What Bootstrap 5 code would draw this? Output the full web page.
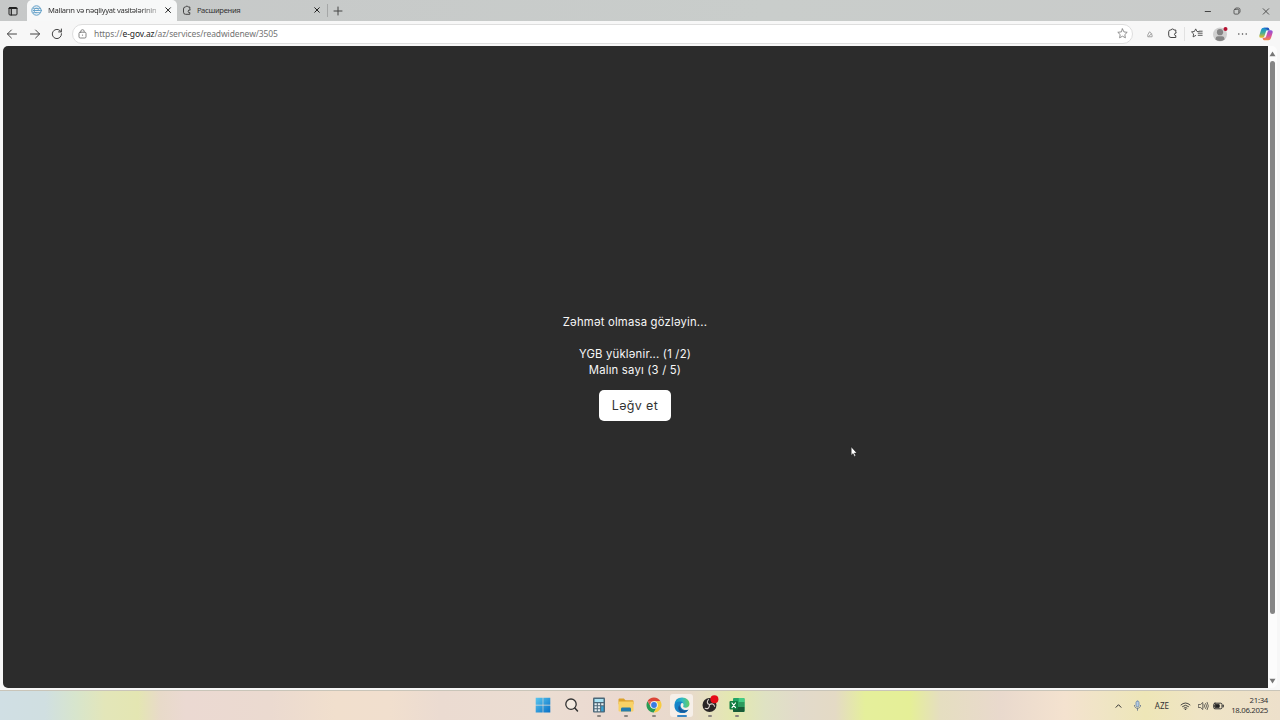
<!DOCTYPE html>
<html lang="az">
  <head>
    <meta charset="UTF-8" />
    <meta name="viewport" content="width=device-width, initial-scale=1.0" />
    <title>Malların və nəqliyyat vasitələrinin</title>
    <!-- Bootstrap CSS -->
    <link
      href="https://cdn.jsdelivr.net/npm/bootstrap@5.3.2/dist/css/bootstrap.min.css"
      rel="stylesheet"
    />
    <style>
      body {
        font-family: "Noto Sans", "Open Sans", sans-serif;
        background-color: #f7f7f7;
        color: #333;
        line-height: 1;
      }
      svg {
        display: block;
        flex-shrink: 0;
        fill: none;
        stroke: #444;
        stroke-width: 1;
        stroke-linecap: round;
        stroke-linejoin: round;
      }
      /* Tab strip */
      .tab-strip {
        height: 21px;
        background: linear-gradient(90deg, #c6c8c8, #c9cdcb 60%, #c9cbca);
        font-size: 7.6px;
      }
      .cell {
        display: flex;
        align-items: center;
        justify-content: center;
        flex-shrink: 0;
      }
      .w-menu { width: 25px; }
      .tab-active {
        width: 150px;
        height: 21px;
        margin-left: 2px;
        padding: 0 4px 1px;
        background-color: #f7f8f8;
        border-radius: 5px 5px 0 0;
      }
      .tab-idle {
        width: 150px;
        height: 21px;
        padding: 0 5px 1px;
      }
      .tab-title {
        margin-left: 5px;
        line-height: 14px;
        white-space: nowrap;
        letter-spacing: -0.3px;
      }
      .tab-fade {
        margin-left: 6px;
        -webkit-mask-image: linear-gradient(90deg, #000 85%, rgba(0, 0, 0, 0.4));
        mask-image: linear-gradient(90deg, #000 85%, rgba(0, 0, 0, 0.4));
      }
      .tab-line {
        width: 1px;
        height: 13px;
        background-color: #a5a7a7;
      }
      .w-plus { width: 20px; }
      .w-win { width: 29px; }
      /* Toolbar */
      .toolbar {
        height: 25px;
      }
      .w-nav { width: 22.5px; padding-left: 2px; }
      .address {
        height: 20px;
        margin-left: 4.5px;
        padding: 0 4px 0 5px;
        background-color: #fff;
        border: 1px solid #dedede;
        border-radius: 10px;
        font-size: 8.5px;
        letter-spacing: -0.1px;
        color: #737373;
      }
      .address-text {
        margin-left: 7px;
        line-height: 14px;
      }
      .address-text span { color: #222; }
      .w-tool { width: 22.6px; }
      .w-ext { margin-left: 5px; }
      .tool-line {
        width: 1px;
        height: 14px;
        background-color: #e2e2e2;
      }
      .w-fav { margin-left: 1px; }
      .w-copilot { margin-left: 1px; margin-right: 3px; }
      /* Page */
      .viewport-row {
        height: 642px;
        padding-left: 3px;
      }
      .overlay {
        background-color: #2c2c2c;
        border-radius: 5px 0 0 5px;
        color: #f7f7f7;
        font-family: Inter, "Noto Sans", sans-serif;
        font-size: 11.3px;
        letter-spacing: 0.2px;
        line-height: 16px;
        padding-top: 268px;
        padding-right: 1px;
      }
      .overlay p { margin: 0; }
      .btn-cancel {
        width: 72px;
        height: 31px;
        margin-top: 12px;
        padding: 1px 0 0;
        background-color: #fff;
        border-radius: 5px;
        color: #333;
        font-size: 12.5px;
        letter-spacing: 0.35px;
      }
      .scroll-track {
        width: 9px;
        margin-right: 3px;
        padding: 5px 0 4px;
        background-color: #fcfcfc;
        border-radius: 0 5px 5px 0;
      }
      .scroll-thumb {
        width: 5px;
        height: 553px;
        margin-top: 4px;
        background-color: #858585;
        border-radius: 3px;
      }
      .pointer {
        position: absolute;
        left: 850px;
        top: 446px;
      }
      /* Taskbar */
      .taskbar {
        height: 30px;
        border-top: 1px solid #c9c5b9;
        font-size: 8px;
        background: linear-gradient(90deg, #d0dfe4 0, #d0dfe1 45px, #d7e5cd 75px,
          #e3e6b9 105px, #e4e6b2 138px, #e8dac9 160px, #ebd9d2 185px, #ebdad0 270px,
          #f1dfcd 335px, #f1dfce 390px, #ebdbd1 440px, #ebddd2 540px, #ebd9d0 620px,
          #e8dacb 690px, #e3e9ae 735px, #dfe2c3 765px, #e2dacb 800px, #e4dac5 835px,
          #e5ef9b 865px, #e5ef97 910px, #e5dec0 940px, #e9d9cd 1000px, #f4e2cf 1065px,
          #efe5c3 1110px, #eee6b7 1145px, #efe4c5 1200px, #ede0cb 1280px);
      }
      .taskbar svg { stroke: #333; }
      .task-icons {
        margin-left: 529.5px;
      }
      .task-app {
        width: 27.7px;
        height: 29px;
        padding-top: 6px;
        display: flex;
        flex-direction: column;
        align-items: center;
      }
      .dash {
        width: 4px;
        height: 2px;
        margin-top: 2px;
        border-radius: 1px;
        background-color: #8b8580;
      }
      .dash-on {
        width: 10px;
        background-color: #3585c5;
      }
      .app-on {
        width: 23px;
        height: 23px;
        margin: 3px 2.3px 0;
        padding-top: 3px;
        background-color: #f6efe9;
        border-radius: 3px;
      }
      .app-obs {
        padding-top: 4px;
        padding-left: 1px;
      }
      .w-tray { width: 19.4px; }
      .w-state { width: 15px; }
      .lang { width: 28.5px; }
      .clock {
        width: 48px;
        padding-right: 12px;
        margin-left: 6.5px;
        line-height: 9.6px;
        font-size: 7.8px;
        letter-spacing: -0.3px;
        white-space: nowrap;
        justify-content: flex-end;
      }
    </style>
  </head>
  <body class="vh-100 overflow-hidden d-flex flex-column">
    <!-- Tabs -->
    <div class="tab-strip d-flex align-items-center">
      <div class="cell w-menu">
        <svg width="10" height="10" viewBox="0 0 10 10"><rect x="1" y="1.5" width="8" height="7.5" rx="1" stroke="#222" /><path d="M1 2.3h8M3.3 3v6" stroke="#222" stroke-width="1.2" /></svg>
      </div>
      <div class="tab-active d-flex align-items-center">
        <svg width="11" height="11" viewBox="0 0 11 11"><circle cx="5.5" cy="5.5" r="4.7" stroke="#5a9bc5" /><path d="M2.4 3.3h6.2M2.2 5.5h6.6M2.4 7.7h6.2M5.2 3.3c-3 0-3 4.4 0 4.4M6 3.3c2 .3 2 2 0 2.2" stroke="#5a9bc5" stroke-width=".9" /></svg>
        <div class="tab-title tab-fade">Malların və nəqliyyat vasitələrinin</div>
        <svg class="ms-auto" width="10" height="10" viewBox="0 0 10 10"><path d="M2.7 2.7l4.8 4.8M7.5 2.7L2.7 7.5" stroke="#222" /></svg>
      </div>
      <div class="tab-idle d-flex align-items-center">
        <svg width="10" height="11" viewBox="0 0 10 11"><path d="M7.8 3.5V2H6.2A1.4 1.4 0 0 0 3.6 2H3.2Q1.5 2 1.5 4v3.2Q1.5 9.3 3.6 9.3h4.2V7.5A1.3 1.3 0 1 1 7.8 5z" /></svg>
        <div class="tab-title">Расширения</div>
        <svg class="ms-auto" width="10" height="10" viewBox="0 0 10 10"><path d="M2.7 2.7l4.6 4.6M7.3 2.7L2.7 7.3" stroke="#222" /></svg>
      </div>
      <div class="tab-line"></div>
      <div class="cell w-plus">
        <svg width="10" height="10" viewBox="0 0 10 10"><path d="M5 1v8M1 5h8" /></svg>
      </div>
      <div class="cell w-win ms-auto">
        <svg width="10" height="10" viewBox="0 0 10 10"><path d="M2.2 5.5h5.3" /></svg>
      </div>
      <div class="cell w-win">
        <svg width="10" height="10" viewBox="0 0 10 10"><rect x="2" y="3.3" width="4.8" height="4.8" rx="1" stroke-width=".8" /><path d="M3.4 2.3Q3.5 2 4 2h2.4Q8 2 8 3.7V6q0 .6-.4.8" stroke-width=".8" /></svg>
      </div>
      <div class="cell w-win">
        <svg width="10" height="10" viewBox="0 0 10 10"><path d="M2.2 2.7l5.5 5.5M7.7 2.7L2.2 8.2" stroke-width=".9" /></svg>
      </div>
    </div>

    <!-- Address bar -->
    <div class="toolbar d-flex align-items-center">
      <div class="cell w-nav">
        <svg width="12" height="12" viewBox="0 0 12 12"><path d="M10.5 6h-9M5.4 2L1.4 6l4 4" /></svg>
      </div>
      <div class="cell w-nav">
        <svg width="12" height="12" viewBox="0 0 12 12"><path d="M1.5 6h9M6.6 2l4 4-4 4" /></svg>
      </div>
      <div class="cell w-nav">
        <svg width="12" height="12" viewBox="0 0 12 12"><path d="M10.5 5.7A4.6 4.6 0 1 1 9 2.6l1.2 1.1M10.4 1v2.9H7.6" /></svg>
      </div>
      <div class="address d-flex align-items-center flex-grow-1">
        <svg width="9" height="10" viewBox="0 0 9 10"><rect x="1" y="3.2" width="7" height="5.8" rx="1.2" stroke="#777" stroke-width=".9" /><path d="M2.8 3V2.4a1.7 1.7 0 0 1 3.4 0V3" stroke="#777" stroke-width=".9" /><circle cx="4.5" cy="6.1" r=".7" fill="#777" stroke="none" /></svg>
        <div class="address-text">https://<span>e-gov.az</span>/az/services/readwidenew/3505</div>
        <svg class="ms-auto" width="11" height="11" viewBox="0 0 11 11"><path d="M5.5.9l1.4 3 3.3.4-2.4 2.3.6 3.2-2.9-1.6-2.9 1.6.6-3.2L.8 4.3l3.3-.4z" stroke="#777" stroke-width=".8" /></svg>
      </div>
      <div class="cell w-tool w-ext">
        <svg width="8" height="8" viewBox="0 0 8 8"><path d="M1.8 6.4V4.8l1.7-3 1 .6 1.6 2.7v1.3zM3 6.2l2.4-2.4" stroke="#999" stroke-width=".9" /></svg>
      </div>
      <div class="cell w-tool">
        <svg width="11" height="11" viewBox="0 0 11 11"><path d="M8.8 3.5V2H6.9a1.4 1.4 0 0 0-2.7 0H3.4Q1.7 2 1.7 3.8v3.4Q1.7 9.5 4 9.5h4.8V7.6a1.3 1.3 0 1 1 0-2.6z" /></svg>
      </div>
      <div class="tool-line"></div>
      <div class="cell w-tool w-fav">
        <svg width="12" height="11" viewBox="0 0 12 11"><path d="M8 3.7l-2-.2L4.7.9 3.4 3.5l-2.9.4 2.1 2-.5 3 2.6-1.4M7.2 5.2h4M7.2 7.3h4M8.2 3.2h3" stroke-width=".9" /></svg>
      </div>
      <div class="cell w-tool">
        <svg width="16" height="16" viewBox="0 0 16 16"><g stroke="none"><circle cx="8" cy="8.5" r="7" fill="#d0d0d0" /><circle cx="8" cy="6.2" r="3.1" fill="#858585" /><path d="M3.5 13.6Q3.5 10.2 6 10.2h4q2.5 0 2.5 3.4-4.5 3-9 0z" fill="#858585" /><circle cx="13.5" cy="3" r="2" fill="#b51030" /></g></svg>
      </div>
      <div class="cell w-tool">
        <svg width="11" height="4" viewBox="0 0 11 4"><path d="M1.8 2h.01M5.5 2h.01M9.2 2h.01" stroke-width="1.5" /></svg>
      </div>
      <div class="cell w-tool w-copilot">
        <svg width="14" height="14" viewBox="0 0 14 14">
          <defs>
            <linearGradient id="cpLeft" x1="0" y1="0" x2="0" y2="1"><stop offset="0" stop-color="#148cdb" /><stop offset=".5" stop-color="#43ad9a" /><stop offset="1" stop-color="#f0bf24" /></linearGradient>
            <linearGradient id="cpRight" x1="0" y1="0" x2="0" y2="1"><stop offset="0" stop-color="#8954dc" /><stop offset=".55" stop-color="#d9509d" /><stop offset="1" stop-color="#f38a45" /></linearGradient>
          </defs>
          <g stroke="none"><path d="M4.6.8h4.2q1 0 1.3 1.2l.4 1.3H8.3q-1 0-1.4 1.2L5.4 9.3Q4.9 10.7 3.5 10.7H2Q-.2 10.7.4 8.2L2 3Q2.7.8 4.6.8z" fill="url(#cpLeft)" /><path d="M9.4 13.2H5.2q-1 0-1.3-1.2l-.4-1.3h2.2q1 0 1.4-1.2l1.5-4.8q.5-1.4 1.9-1.4H12q2.2 0 1.6 2.5L12 11q-.7 2.2-2.6 2.2z" fill="url(#cpRight)" /><path d="M4.6.8h4.2q1 0 1.3 1.2l.4 1.3H8.3L7.5 1.9z" fill="#2455bd" /></g>
        </svg>
      </div>
    </div>

    <!-- Page content -->
    <div class="viewport-row d-flex">
      <main class="overlay flex-grow-1 text-center">
        <p>Zəhmət olmasa gözləyin...</p>
        <br />
        <p>YGB yüklənir... (1 /2)</p>
        <p>Malın sayı (3 / 5)</p>
        <button type="button" class="btn btn-cancel">Ləğv et</button>
      </main>
      <div class="scroll-track d-flex flex-column align-items-center">
        <svg width="7" height="6" viewBox="0 0 7 6"><path d="M3.5.5L6.5 5.2h-6z" fill="#777" stroke="none" /></svg>
        <div class="scroll-thumb"></div>
        <svg class="mt-auto" width="7" height="6" viewBox="0 0 7 6"><path d="M3.5 5.5L.5.8h6z" fill="#777" stroke="none" /></svg>
      </div>
    </div>

    <!-- Taskbar -->
    <div class="taskbar d-flex mt-auto">
      <div class="task-icons d-flex">
        <div class="task-app">
          <svg width="16" height="16" viewBox="0 0 16 16">
            <defs><linearGradient id="winBlue" x1="0" y1="0" x2="1" y2="1"><stop offset="0" stop-color="#5bc7ef" /><stop offset="1" stop-color="#0870c6" /></linearGradient></defs>
            <path d="M.7.8h7v7h-7zM8.3.8h7v7h-7zM.7 8.4h7v7h-7zM8.3 8.4h7v7h-7z" fill="url(#winBlue)" stroke="none" />
          </svg>
        </div>
        <div class="task-app">
          <svg width="16" height="16" viewBox="0 0 16 16"><circle cx="8" cy="7.2" r="5.2" fill="#f3e9df" stroke-width="1.3" /><path d="M11.8 11l2.7 3" stroke-width="1.5" /></svg>
        </div>
        <div class="task-app">
          <svg width="16" height="16" viewBox="0 0 16 16"><g stroke="none"><rect x="2" y=".5" width="12" height="15" rx="1" fill="#4c6778" /><rect x="3.5" y="2" width="9" height="3" fill="#a9e1f2" /><path d="M3.5 6.3h2.3v2H3.5zM6.8 6.3h2.3v2H6.8zM10.2 6.3h2.3v2h-2.3zM3.5 9.3h2.3v2H3.5zM6.8 9.3h2.3v2H6.8zM3.5 12.3h2.3v2H3.5zM6.8 12.3h2.3v2H6.8z" fill="#e6edf0" /><path d="M10.2 9.3h2.3v5h-2.3z" fill="#36a3d5" /></g></svg>
          <div class="dash"></div>
        </div>
        <div class="task-app">
          <svg width="16" height="16" viewBox="0 0 16 16"><g stroke="none"><path d="M.5 2.5Q.5 1.5 1.5 1.5h4.3l1.7 1.8h7q1 0 1 1v3H.5z" fill="#dca12b" /><rect x=".5" y="4.5" width="15" height="10" rx="1" fill="#f9d266" /><path d="M3 14.5v-2.6q0-1.4 1.4-1.4h7.2q1.4 0 1.4 1.4v2.6z" fill="#257cad" /></g></svg>
          <div class="dash"></div>
        </div>
        <div class="task-app">
          <svg width="16" height="16" viewBox="0 0 16 16"><g stroke="none"><path d="M1.5 4.2A7.5 7.5 0 0 1 14.5 4.3H8z" fill="#dc4437" /><path d="M1.5 4.2A7.5 7.5 0 0 0 7.8 15.5L11.2 9.8 4.8 9.8z" fill="#299b54" /><path d="M14.5 4.3A7.5 7.5 0 0 1 7.8 15.5l3.5-5.7L9 4.3z" fill="#f7cb3f" /><path d="M1.5 4.2l3.3 5.6L8 4.3z" fill="#dc4437" opacity=".8" /><circle cx="8" cy="8" r="3.8" fill="#f7f7f7" /><circle cx="8" cy="8" r="2.9" fill="#397be1" /></g></svg>
          <div class="dash"></div>
        </div>
        <div class="task-app app-on">
          <svg width="16" height="16" viewBox="0 0 16 16">
            <defs><linearGradient id="edgeTop" x1="0" y1="0" x2="1" y2="0"><stop offset="0" stop-color="#168fce" /><stop offset=".5" stop-color="#31b9c8" /><stop offset="1" stop-color="#66cf60" /></linearGradient></defs>
            <g stroke="none"><path d="M.5 8Q1 .6 8 .6c4.8 0 7.5 3.2 7.5 6.3 0 2.4-1.8 3.8-4 3.8-1.8 0-2.7-.7-2.2-1.6.9-1.7-.4-3.5-2.8-3.5-2.7 0-5 1.5-6 2.4z" fill="url(#edgeTop)" /><path d="M.5 8c.7-2 3.2-3.6 5.8-3.4 1.3.1 2.2.5 2.7 1.1-3-.2-4 5.5 1.6 7.2 1.6.5 2.8 0 3.9-.5A7.5 7.5 0 0 1 .5 8z" fill="#1683c8" /><path d="M5.7 8c-.3 3.4 2.5 5.6 5 5.5 1.4 0 2.8-.6 3.8-1.1-1.5 2.4-4.6 3.4-7.2 3C3.5 14 3.8 9.4 5.7 8z" fill="#1a5798" /></g>
          </svg>
          <div class="dash dash-on"></div>
        </div>
        <div class="task-app app-obs">
          <svg width="18" height="18" viewBox="0 0 18 18"><g stroke="none"><circle cx="8.5" cy="10" r="7" fill="#292526" /><path d="M8.3 9.6C5.8 8.7 5.8 6.2 7.5 4.7M8.8 9.7c2-1.8 4.2-.3 4.8 1.6M8.4 10.3c.2 2.8-2 3.9-4.2 3" fill="none" stroke="#d8cfcc" stroke-width="1.1" /><circle cx="13.4" cy="4.2" r="4" fill="#e60c17" /></g></svg>
          <div class="dash"></div>
        </div>
        <div class="task-app">
          <svg width="16" height="16" viewBox="0 0 16 16"><g stroke="none"><rect x="4" y="1" width="11.5" height="14" rx="1" fill="#21a366" /><path d="M9.7 1h4.8q1 0 1 1v3H9.7z" fill="#43cb83" /><path d="M4 10h11.5v4q0 1-1 1H5q-1 0-1-1z" fill="#185c37" /><path d="M9.7 5h5.8v5H9.7z" fill="#2c9a5d" /><rect x=".5" y="4" width="8.5" height="8.5" rx="1" fill="#107c41" /></g><path d="M3 6l3.5 4.6M6.5 6L3 10.6" stroke="#fff" stroke-width="1.2" /></svg>
          <div class="dash"></div>
        </div>
      </div>

      <!-- System tray -->
      <div class="d-flex ms-auto align-items-center">
        <div class="cell w-tray">
          <svg width="9" height="8" viewBox="0 0 9 8"><path d="M2 5.3l2.5-2.6L7 5.3" /></svg>
        </div>
        <div class="cell w-tray">
          <svg width="9" height="11" viewBox="0 0 9 11"><rect x="3" y="1" width="3" height="5.8" rx="1.5" fill="#b7cce2" stroke="#6685ab" stroke-width=".8" /><path d="M1.4 5.4c0 4 6.2 4 6.2 0M4.5 8.5v1.8" stroke="#596b86" stroke-width=".8" /></svg>
        </div>
        <div class="cell lang">AZE</div>
        <div class="cell w-tray">
          <svg width="11" height="10" viewBox="0 0 11 10"><path d="M1 3.9Q5.5-.1 10 3.9M2.5 5.5q3-2.7 6 0M4 7q1.5-1.3 3 0" stroke-width=".9" /><circle cx="5.5" cy="8.2" r=".8" fill="#333" stroke="none" /></svg>
        </div>
        <div class="cell w-state">
          <svg width="11" height="10" viewBox="0 0 11 10"><path d="M.7 3.5h1.8l2.3-2v7l-2.3-2H.7zM6.2 3.6q.9 1.4 0 2.8M7.7 2.4q1.9 2.6 0 5.2M9.2 1.3q2.5 3.7 0 7.4" stroke-width=".7" /></svg>
        </div>
        <div class="cell w-state">
          <svg width="11" height="8" viewBox="0 0 11 8"><rect x=".7" y="1.2" width="8.3" height="5.6" rx="1.3" /><path d="M2.2 2.7h4v2.6h-4z" fill="#222" stroke="#222" /><path d="M10.2 3.2v1.6" stroke-width="1.2" /></svg>
        </div>
        <div class="cell clock text-end">21:34<br />18.06.2025</div>
      </div>
    </div>

    <!-- Mouse pointer -->
    <svg class="pointer" width="8" height="12" viewBox="0 0 8 12"><path d="M1.2 1v8.3l1.9-1.7 1.3 2.8 1.3-.6-1.3-2.7h2.3z" fill="#fff" stroke="#222" stroke-width=".5" /></svg>

    <!-- Bootstrap JS -->
    <script src="https://cdn.jsdelivr.net/npm/bootstrap@5.3.2/dist/js/bootstrap.bundle.min.js"></script>
  </body>
</html>
